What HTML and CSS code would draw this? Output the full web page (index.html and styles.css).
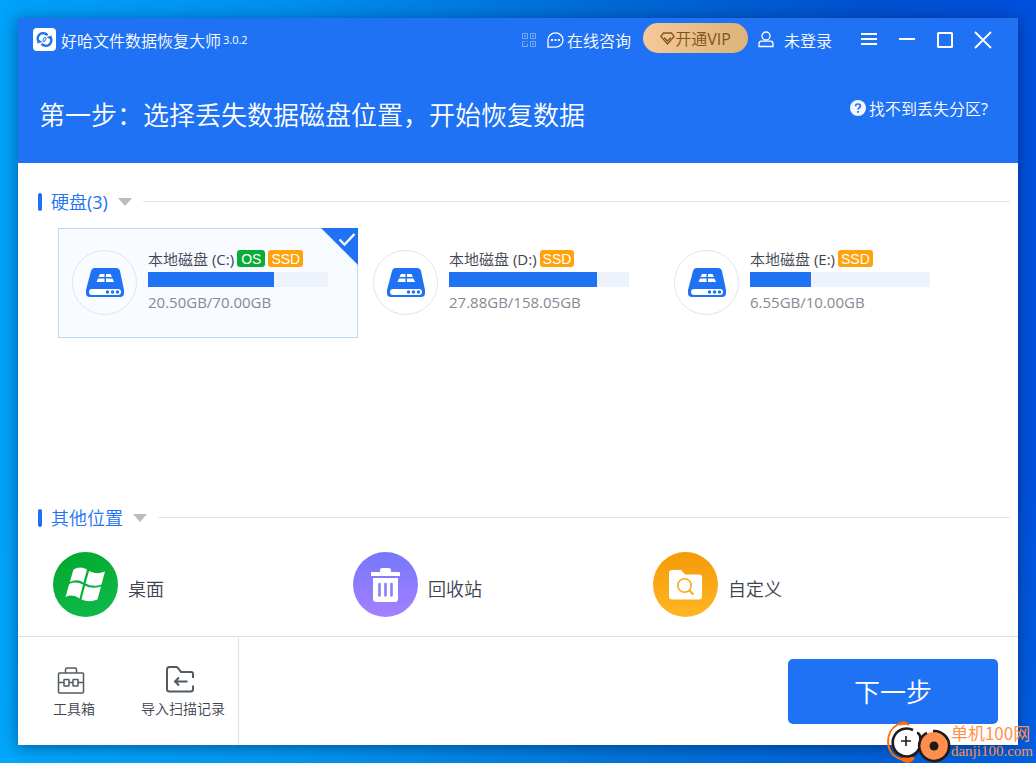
FILE: index.html
```html
<!DOCTYPE html>
<html lang="zh-CN">
<head>
<meta charset="utf-8">
<meta name="viewport" content="width=device-width, initial-scale=1">
<title>好哈文件数据恢复大师</title>
<link rel="stylesheet" href="styles.css">
</head>
<body>
<svg class="defs" aria-hidden="true">
  <symbol id="disk" viewBox="0 0 38 30">
    <path d="M8 0H30Q33 0 34 3L38 22V25Q38 29 34 29H4Q0 29 0 25V22L5 3Q6 0 8 0Z" fill="#2072f4"/>
    <rect x="3" y="21" width="32" height="6" rx="3" fill="#fff"/>
    <path d="M14 6H18.500V9H12.500ZM20 6H24.500L26 9H20ZM12 10.500H18.500V14H10.500ZM20 10.500H26.500L28 14H20Z" fill="#fff"/>
    <circle cx="21.500" cy="24" r="1.700" fill="#2072f4"/><circle cx="26.500" cy="24" r="1.700" fill="#2072f4"/><circle cx="31.500" cy="24" r="1.700" fill="#2072f4"/>
  </symbol>
</svg>
<div class="window">
  <header class="header">
    <div class="titlebar">
      <svg class="logo" viewBox="0 0 23 23" aria-hidden="true">
        <rect width="23" height="23" rx="4" fill="#fff"/>
        <path d="M5.800 14A5.200 5.200 0 0 1 14.500 7.300M17.200 9A5.200 5.200 0 0 1 8.500 15.700" fill="none" stroke="#2072f4" stroke-width="2.400"/>
        <path d="M13.500 9L19 7.500L17.500 11.500ZM9.500 14L4 15.500L5.500 11.500Z" fill="#2072f4"/>
        <ellipse cx="11.500" cy="11.500" rx="1.200" ry="2.200" transform="rotate(30 11.500 11.500)" fill="none" stroke="#2072f4"/>
      </svg>
      <span class="app-name">好哈文件数据恢复大师</span>
      <span class="version">3.0.2</span>
      <nav class="actions">
        <button class="plain qr" type="button" aria-label="二维码">
          <svg width="14" height="14" viewBox="0 0 14 14" fill="none" stroke="#79aaf8"><path d="M.5.5h5v5h-5zM8.500.5h5v5h-5zM8.500 8.500h5v5h-5zM.5 13.500v-5h2M4.500 8.500h1M.5 13.500h5v-2.500M2.500 2.500h1v1h-1zM10.500 2.500h1v1h-1zM10.500 10.500h1v1h-1zM2.500 11h1"/></svg>
        </button>
        <button class="plain consult" type="button">
          <svg width="17" height="16" viewBox="0 0 17 16" fill="none" stroke="#fff" stroke-width="1.300"><path d="M1 15V8A7.500 7.200 0 1 1 8.500 15.200Z"/><path d="M4 8h2M7.500 8h2M11 8h2" stroke-width="1.800"/></svg>
          在线咨询
        </button>
        <button class="vip" type="button">
          <svg width="15" height="13" viewBox="0 0 15 13" fill="none" stroke="#80541f" stroke-width="1.300"><path d="M3.500 1H11.500L14.200 4.500L7.500 12L.8 4.500ZM4 5.500L7.500 9L11 5.500"/></svg><span>开通<span class="latin">VIP</span></span>
        </button>
        <button class="plain login" type="button">
          <svg width="16" height="17" viewBox="0 0 16 17" fill="none" stroke="#fff" stroke-width="1.300"><circle cx="8" cy="5" r="4"/><path d="M3.500 10.200H12.500Q15 10.200 15 13V15.500H1V13Q1 10.200 3.500 10.200Z"/></svg>
          未登录
        </button>
        <button class="plain" type="button" aria-label="菜单">
          <svg width="18" height="18" viewBox="0 0 18 18" fill="none" stroke="#fff" stroke-width="2"><path d="M1 3H17M1 8H17M1 13H17"/></svg>
        </button>
        <button class="plain" type="button" aria-label="最小化">
          <svg width="18" height="18" viewBox="0 0 18 18" fill="none" stroke="#fff" stroke-width="2"><path d="M1 8H17"/></svg>
        </button>
        <button class="plain" type="button" aria-label="最大化">
          <svg width="18" height="18" viewBox="0 0 18 18" fill="none" stroke="#fff" stroke-width="2"><rect x="2" y="2" width="14" height="14" rx=".5"/></svg>
        </button>
        <button class="plain" type="button" aria-label="关闭">
          <svg width="18" height="18" viewBox="0 0 18 18" fill="none" stroke="#fff" stroke-width="1.800"><path d="M1 1L17 17M17 1L1 17"/></svg>
        </button>
      </nav>
    </div>
    <div class="step">
      <h1>第一步：选择丢失数据磁盘位置，开始恢复数据</h1>
      <a class="help" href="#">
        <svg width="16" height="16" viewBox="0 0 16 16" aria-hidden="true"><circle cx="8" cy="8" r="8" fill="#f2f7ff"/><path d="M5.500 6.300Q5.600 4 8 4Q10.400 4 10.400 6Q10.400 7.200 9 7.900Q8 8.400 8 9.600" fill="none" stroke="#2072f4" stroke-width="1.700"/><rect x="7.100" y="11" width="1.800" height="1.800" fill="#2072f4"/></svg>
        <span>找不到丢失分区<span class="latin">?</span></span>
      </a>
    </div>
  </header>

  <main class="content">
    <section class="drives-section">
      <h2 class="heading"><button class="toggle" type="button"><span>硬盘<span class="latin">(3)</span></span></button></h2>
      <div class="drives">
        <label class="drive">
          <input type="radio" name="drive" checked>
          <span class="disk"><svg width="38" height="30"><use href="#disk"/></svg></span>
          <span class="info">
            <span class="name"><span>本地磁盘 <span class="latin">(C:)</span></span><b class="tag os">OS</b><b class="tag">SSD</b></span>
            <span class="bar"><span class="fill" style="width:70%"></span></span>
            <span class="size">20.50GB/70.00GB</span>
          </span>
          <svg class="corner" width="37" height="37" viewBox="0 0 37 37"><path d="M0 0H37V37Z" fill="#2072f4"/><path d="M18.500 11.500L23.500 16.500L33.500 6" fill="none" stroke="#fff" stroke-width="2.400"/></svg>
        </label>
        <label class="drive">
          <input type="radio" name="drive">
          <span class="disk"><svg width="38" height="30"><use href="#disk"/></svg></span>
          <span class="info">
            <span class="name"><span>本地磁盘 <span class="latin">(D:)</span></span><b class="tag">SSD</b></span>
            <span class="bar"><span class="fill" style="width:82%"></span></span>
            <span class="size">27.88GB/158.05GB</span>
          </span>
          <svg class="corner" width="37" height="37" viewBox="0 0 37 37"><path d="M0 0H37V37Z" fill="#2072f4"/><path d="M18.500 11.500L23.500 16.500L33.500 6" fill="none" stroke="#fff" stroke-width="2.400"/></svg>
        </label>
        <label class="drive">
          <input type="radio" name="drive">
          <span class="disk"><svg width="38" height="30"><use href="#disk"/></svg></span>
          <span class="info">
            <span class="name"><span>本地磁盘 <span class="latin">(E:)</span></span><b class="tag">SSD</b></span>
            <span class="bar"><span class="fill" style="width:34%"></span></span>
            <span class="size">6.55GB/10.00GB</span>
          </span>
          <svg class="corner" width="37" height="37" viewBox="0 0 37 37"><path d="M0 0H37V37Z" fill="#2072f4"/><path d="M18.500 11.500L23.500 16.500L33.500 6" fill="none" stroke="#fff" stroke-width="2.400"/></svg>
        </label>
      </div>
    </section>

    <section>
      <h2 class="heading"><button class="toggle" type="button">其他位置</button></h2>
      <div class="places">
        <button class="place" type="button">
          <span class="round desktop">
            <svg width="41" height="35" viewBox="0 0 41 35" fill="#fff"><path d="M8.500 2.500Q15-1.500 22 2.500L18.500 15.500Q12 11.500 4.800 15ZM24 4Q31 8 40 4.500L36.500 17.500Q28 20.500 20.500 16.500ZM4.200 17Q11 13.800 18 17.500L14.500 31.500Q8 26.500 .5 30ZM20 18.700Q27 22.500 36 19.500L32.500 32.500Q24 36 16.500 32.500Z"/></svg>
          </span>
          <span>桌面</span>
        </button>
        <button class="place" type="button">
          <span class="round bin">
            <svg width="29" height="34" viewBox="0 0 29 34"><path d="M9 4V2Q9 0 11 0H18Q20 0 20 2V4H28Q29 4 29 5V8H0V5Q0 4 1 4ZM2 10H27V31Q27 34 24 34H5Q2 34 2 31Z" fill="#fff"/><path d="M8.500 16V27.500M14.500 16V27.500M20.500 16V27.500" stroke="#8e7dfc" stroke-width="2.600" stroke-linecap="round"/></svg>
          </span>
          <span>回收站</span>
        </button>
        <button class="place" type="button">
          <span class="round custom">
            <svg width="33" height="30" viewBox="0 0 33 30"><path d="M3 0H12L16 4.500H30Q33 4.500 33 7.500V26Q33 29.500 30 29.500H3Q0 29.500 0 26V3Q0 0 3 0Z" fill="#fff"/><circle cx="15.500" cy="15.500" r="6.700" fill="none" stroke="#faa816" stroke-width="1.600"/><path d="M20 20L24.500 24.500" stroke="#faa816" stroke-width="2.200"/></svg>
          </span>
          <span>自定义</span>
        </button>
      </div>
    </section>
  </main>

  <footer class="footer">
    <div class="tools">
      <button class="tool" type="button">
        <svg width="28" height="28" viewBox="0 0 28 28" fill="none" stroke="#505b62" stroke-width="1.500"><rect x="1.500" y="7" width="25" height="20" rx="1"/><path d="M8.500 7V3.500Q8.500 2 10 2H18Q19.500 2 19.500 3.500V7M1.500 16.500H7M12 16.500H16M21 16.500H26.500"/><rect x="7" y="13.500" width="5" height="6.500" rx=".5"/><rect x="16" y="13.500" width="5" height="6.500" rx=".5"/></svg>
        <span>工具箱</span>
      </button>
      <button class="tool" type="button">
        <svg width="28" height="28" viewBox="0 0 28 28" fill="none" stroke="#505b62" stroke-width="2"><path d="M27 12V8Q27 6 25 6H15L12 2Q11 1 10 1H3.500Q1 1 1 3.500V23Q1 25.500 3.500 25.500H24.500Q27 25.500 27 23V19.500M21.500 15.500H9M13 11.500L9 15.500L13 19.500"/></svg>
        <span>导入扫描记录</span>
      </button>
    </div>
    <button class="next" type="button">下一步</button>
  </footer>
</div>

<div class="watermark">
  <svg width="64" height="42" viewBox="0 0 64 42" fill="none">
    <circle cx="19" cy="21" r="14.500" fill="#fff"/>
    <path d="M22 4Q16-1 10 4Q1 9 1 21Q2 35 14 38Q21 44 27 37" stroke="#ff6c0a" stroke-width="2"/>
    <path d="M12 4Q17-2 21 3ZM14 38Q22 34 27 37Q23 44 14 38Z" fill="#ff6c0a" stroke="#ff6c0a"/>
    <path d="M26 9A14 14 0 1 0 30 31Q35 25 33 15Q32 12 30 12" stroke="#211a1b" stroke-width="2.600"/>
    <path d="M14 20H24M19 15V25" stroke="#211a1b" stroke-width="1.600"/>
    <circle cx="47" cy="25" r="14" fill="#ff8f4c"/>
    <path d="M46 10A15 15 0 1 1 33 20Q35 14 40 12" stroke="#211a1b" stroke-width="2.600"/>
    <circle cx="47" cy="25" r="4.500" fill="#211a1b"/>
  </svg>
  <div class="mark-text"><span class="mark-name">单机100网</span><span class="mark-url">danji100.com</span></div>
</div>
</body>
</html>
```
FILE: styles.css
```css
* { box-sizing: border-box; }
body {
  margin: 0;
  padding: 18px;
  min-height: 100vh;
  display: flex;
  position: relative;
  font-family: "Open Sans", "Noto Sans CJK SC", sans-serif;
  font-weight: 350;
  color: #3e434f;
  background:
    linear-gradient(to bottom, transparent 60%, rgba(0, 190, 255, 0.15)),
    linear-gradient(to right, #00a2fa 0%, #0090ee 28%, #0068d4 60%, #0050d0 85%, #0050de 100%);
}
button {
  font: inherit;
  color: inherit;
  background: none;
  border: 0;
  padding: 0;
  cursor: pointer;
}
svg { display: block; flex: none; }
.defs { position: absolute; width: 0; height: 0; }
.latin { font-weight: 400; }

.window {
  flex: 1;
  display: flex;
  flex-direction: column;
  min-width: 0;
  background: #fff;
  box-shadow: 0 2px 14px rgba(0, 20, 60, 0.5);
}

/* header */
.header {
  height: 145px;
  background: #2072f4;
  color: #fff;
}
.titlebar {
  display: flex;
  align-items: center;
  height: 43px;
  padding: 0 26px 0 15px;
  white-space: nowrap;
}
.logo { width: 23px; height: 23px; }
.app-name { margin-left: 5px; font-size: 16px; }
.version { margin-left: 2px; font-size: 11px; font-weight: 400; }
.actions {
  display: flex;
  align-items: center;
  gap: 20px;
  margin-left: auto;
  font-size: 16px;
}
.plain { display: flex; align-items: center; gap: 3px; }
.consult { margin-left: -9px; }
.vip {
  display: flex;
  align-items: center;
  justify-content: center;
  width: 105px;
  height: 30px;
  margin: 0 -10px 3px -8px;
  border-radius: 15px;
  color: #80541f;
  background: linear-gradient(to right, #f6c898, #dcb379);
}
.login { gap: 10px; margin-right: 8px; }
.step {
  display: flex;
  justify-content: space-between;
  padding: 35px 30px 0 21px;
}
h1 { margin: 0; font-size: 26px; line-height: 38px; font-weight: 350; }
.help {
  display: flex;
  align-items: center;
  gap: 3px;
  height: 24px;
  font-size: 16px;
  color: #fff;
  text-decoration: none;
}

/* content */
.content {
  flex: 1;
  display: flex;
  flex-direction: column;
  padding: 26px 8px 19px 20px;
}
.drives-section { flex: 1; }
.heading {
  display: flex;
  align-items: center;
  gap: 9px;
  margin: 0;
  font-size: 18px;
  line-height: 26px;
  font-weight: 350;
  color: #2072f4;
}
.heading::before {
  content: "";
  width: 4px;
  height: 18px;
  border-radius: 2px;
  background: #2072f4;
}
.heading::after {
  content: "";
  flex: 1;
  height: 1px;
  margin-bottom: 2px;
  background: #e4e4e4;
}
.toggle { display: flex; align-items: center; gap: 10px; margin-right: 2px; }
.toggle::after {
  content: "";
  border: 7px solid transparent;
  border-top: 8px solid #bcbcbc;
  border-bottom: 0;
}
.drives {
  display: grid;
  grid-template-columns: repeat(3, 300px);
  gap: 1px;
  margin: 13px 0 0 20px;
}
.drive {
  position: relative;
  display: flex;
  gap: 11px;
  height: 110px;
  padding: 21px 13px;
  border: 1px solid transparent;
  cursor: pointer;
}
.drive input { position: absolute; opacity: 0; }
.drive:has(input:checked) { background: #f8fbff; border-color: #bcd5fa; }
.corner { display: none; position: absolute; top: -1px; right: -1px; }
input:checked ~ .corner { display: block; }
.disk {
  display: grid;
  place-items: center;
  width: 65px;
  height: 65px;
  border: 1px solid #e4e4e4;
  border-radius: 50%;
}
.info { flex: none; display: flex; flex-direction: column; width: 180px; font-size: 15px; }
.name { display: flex; align-items: center; height: 17px; white-space: nowrap; }
.tag {
  height: 17px;
  margin-left: 3px;
  padding: 0 3px;
  border-radius: 3px;
  background: #ffa30c;
  color: #fff;
  font: 14px/18px "Liberation Sans", Arial, sans-serif;
}
.os { background: #09ac36; padding: 0 4px; }
.bar { height: 15px; margin: 5px 0; background: #eef3fb; }
.fill { display: block; height: 100%; background: #2072f4; }
.size { line-height: 20px; font-size: 15px; font-weight: 400; color: #858a95; }

.places { display: grid; grid-template-columns: repeat(3, 300px); margin: 21px 0 0 15px; }
.place { display: flex; align-items: center; gap: 10px; font-size: 18px; }
.place > span:last-child { padding-top: 7px; }
.round { display: grid; place-items: center; width: 65px; height: 65px; border-radius: 50%; }
.desktop { background: linear-gradient(160deg, #00a82c, #12ba4c); }
.bin { background: linear-gradient(#7478fc, #a580ff); }
.custom { background: linear-gradient(#f59a08, #ffb624); }

/* footer */
.footer {
  display: flex;
  align-items: center;
  justify-content: space-between;
  height: 109px;
  padding-right: 20px;
  border-top: 1px solid #e0e0e0;
}
.tools {
  display: flex;
  justify-content: space-between;
  align-items: center;
  width: 221px;
  height: 108px;
  padding: 2px 13px 0 35px;
  border-right: 1px solid #e0e0e0;
  font-size: 14px;
}
.tool { display: flex; flex-direction: column; align-items: center; gap: 5px; line-height: 20px; }
.tool svg { margin-right: 6px; }
.next {
  width: 210px;
  height: 65px;
  border-radius: 5px;
  background: #2072f4;
  color: #fff;
  font-size: 26px;
}

.watermark {
  position: absolute;
  right: 3px;
  bottom: 0;
  display: flex;
  align-items: center;
  color: #ff8f4c;
  font-family: "Noto Sans CJK SC", sans-serif;
  font-weight: 400;
}
.mark-text { display: flex; flex-direction: column; line-height: 18px; }
.mark-name { font-size: 17px; }
.mark-url { font-family: "Liberation Serif", serif; font-size: 15px; }
```
